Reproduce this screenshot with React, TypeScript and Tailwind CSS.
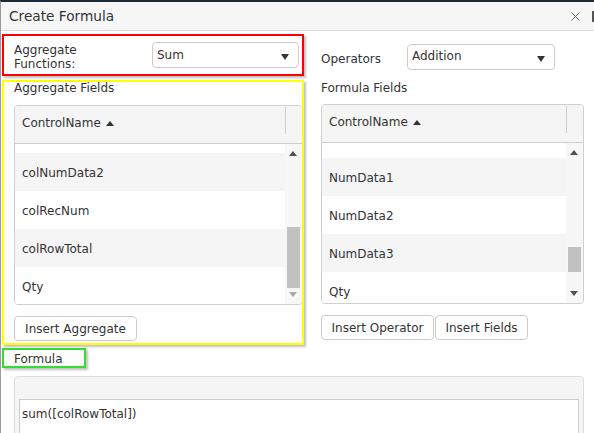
import React from "react";

const Tri = ({ dir, color }: { dir: "up" | "down"; color: string }) => (
  <svg width="8" height="5" viewBox="0 0 8 5" className="block">
    <path d={dir === "up" ? "M0 5 L4 0 L8 5Z" : "M0 0 L8 0 L4 5Z"} fill={color} />
  </svg>
);

type Row = { name: string; gray: boolean; h: number };

function Grid({
  width,
  spacer,
  rows,
  thumbTop,
  thumbH,
  downColor,
}: {
  width: number;
  spacer: number;
  rows: Row[];
  thumbTop: number;
  thumbH: number;
  downColor: string;
}) {
  return (
    <div
      className="border border-[#cfcfcf] rounded-[4px] overflow-hidden bg-white"
      style={{ width }}
    >
      <div className="flex h-[38px] bg-[#f5f5f5] border-b border-[#cfcfcf]">
        <div className="flex-1 flex items-center pl-[7px] pb-[3px] gap-[5px]">
          <span>ControlName</span>
          <Tri dir="up" color="#333" />
        </div>
        <div className="w-[17px] flex items-start pt-[1px]">
          <div className="h-[27px] border-l border-[#cfcfcf]" />
        </div>
      </div>
      <div className="flex h-[160px]">
        <div className="flex-1 flex flex-col overflow-hidden">
          <div className="bg-white shrink-0" style={{ height: spacer }} />
          {rows.map((r) => (
            <div
              key={r.name}
              className={`shrink-0 flex items-center pl-[7px] pt-[1px] ${r.gray ? "bg-[#f5f5f5]" : "bg-white"}`}
              style={{ height: r.h }}
            >
              {r.name}
            </div>
          ))}
        </div>
        <div className="w-[17px] relative bg-[#f7f7f7]">
          <div className="absolute left-[4px] top-[7px]">
            <Tri dir="up" color="#505050" />
          </div>
          <div
            className="absolute left-[2px] w-[13px] bg-[#c1c1c1]"
            style={{ top: thumbTop, height: thumbH }}
          />
          <div className="absolute left-[4px] bottom-[7px]">
            <Tri dir="down" color={downColor} />
          </div>
        </div>
      </div>
    </div>
  );
}

function Select({ value, width, lift }: { value: string; width: number; lift?: boolean }) {
  return (
    <div
      className="h-[26px] border border-[#cccccc] rounded-[4px] bg-white flex items-center justify-between pl-[4px] pr-[9px]"
      style={{ width }}
    >
      <span className={lift ? "-mt-[2px]" : ""}>{value}</span>
      <svg width="8" height="6" viewBox="0 0 8 6" className="mt-[3px]">
        <path d="M0 0 L8 0 L4 6Z" fill="#333" />
      </svg>
    </div>
  );
}

function Btn({ label, width }: { label: string; width: number }) {
  return (
    <div
      className="h-[25px] border border-[#cccccc] rounded-[4px] bg-white flex items-center justify-center"
      style={{ width }}
    >
      {label}
    </div>
  );
}

export default function App() {
  return (
    <div className="w-[594px] h-[433px] overflow-hidden bg-white border-t-2 border-t-[#1e2b38] border-l border-l-[#9a9a9a] font-['DejaVu_Sans',sans-serif] text-[12px] leading-[14px] text-[#333]">
      <div className="h-[29px] bg-[#f6f6f6] border-b border-[#dcdcdc] flex items-center pl-[8px]">
        <span className="text-[13.7px] leading-[16px] flex-1">Create Formula</span>
        <svg width="9" height="9" viewBox="0 0 9 9" className="mr-[12px]">
          <path d="M0.5 0.5 L8.5 8.5 M8.5 0.5 L0.5 8.5" stroke="#666" strokeWidth="1" />
        </svg>
        <div className="w-[2px] h-[11px] bg-[#555]" />
      </div>

      <div className="flex">
        {/* Left column */}
        <div className="ml-[1px] w-[302px]">
          <div className="mt-[3px] h-[42px] border-2 border-[#ff0000] shadow-[2px_2px_2px_rgba(0,0,0,0.25)] flex items-start pl-[10px]">
            <div className="w-[138px] pt-[7px]">
              Aggregate
              <br />
              Functions:
            </div>
            <div className="mt-[6px]">
              <Select value="Sum" width={147} />
            </div>
          </div>

          <div className="mt-[4px] h-[265px] border-2 border-[#ffff00] shadow-[2px_2px_2px_rgba(0,0,0,0.25)] pl-[10px] overflow-hidden">
            <div className="h-[14px] -mt-[1px]">Aggregate Fields</div>
            <div className="mt-[10px]">
              <Grid
                width={289}
                spacer={9}
                rows={[
                  { name: "colNumData2", gray: true, h: 38 },
                  { name: "colRecNum", gray: false, h: 38 },
                  { name: "colRowTotal", gray: true, h: 38 },
                  { name: "Qty", gray: false, h: 38 },
                ]}
                thumbTop={83}
                thumbH={61}
                downColor="#a8a8a8"
              />
            </div>
            <div className="mt-[11px]">
              <Btn label="Insert Aggregate" width={123} />
            </div>
          </div>
        </div>

        {/* Right column */}
        <div className="ml-[17px] w-[263px]">
          <div className="mt-[3px] h-[42px] flex items-start">
            <div className="w-[86px] pt-[18px]">Operators</div>
            <div className="mt-[10px]">
              <Select value="Addition" width={148} lift />
            </div>
          </div>
          <div className="mt-[4px] pt-[1px] h-[14px]">Formula Fields</div>
          <div className="mt-[10px]">
            <Grid
              width={263}
              spacer={15}
              rows={[
                { name: "NumData1", gray: true, h: 38 },
                { name: "NumData2", gray: false, h: 38 },
                { name: "NumData3", gray: true, h: 38 },
                { name: "Qty", gray: false, h: 38 },
              ]}
              thumbTop={104}
              thumbH={25}
              downColor="#505050"
            />
          </div>
          <div className="mt-[11px] flex gap-[1px]">
            <Btn label="Insert Operator" width={113} />
            <Btn label="Insert Fields" width={93} />
          </div>
        </div>
      </div>

      <div className="ml-[1px] mt-[3px] w-[84px] h-[20px] border-2 border-[#33dd33] shadow-[2px_2px_2px_rgba(0,0,0,0.25)] pl-[10px] pt-[1px] flex items-center">
        Formula
      </div>

      <div className="ml-[13px] mt-[8px] w-[570px] h-[80px] bg-[#f5f5f5] border border-[#dddddd] rounded-[4px] px-[4px] pt-[22px]">
        <div className="h-[60px] bg-white border border-[#cccccc] pl-[2px] pt-[7px]">
          sum([colRowTotal])
        </div>
      </div>
    </div>
  );
}
